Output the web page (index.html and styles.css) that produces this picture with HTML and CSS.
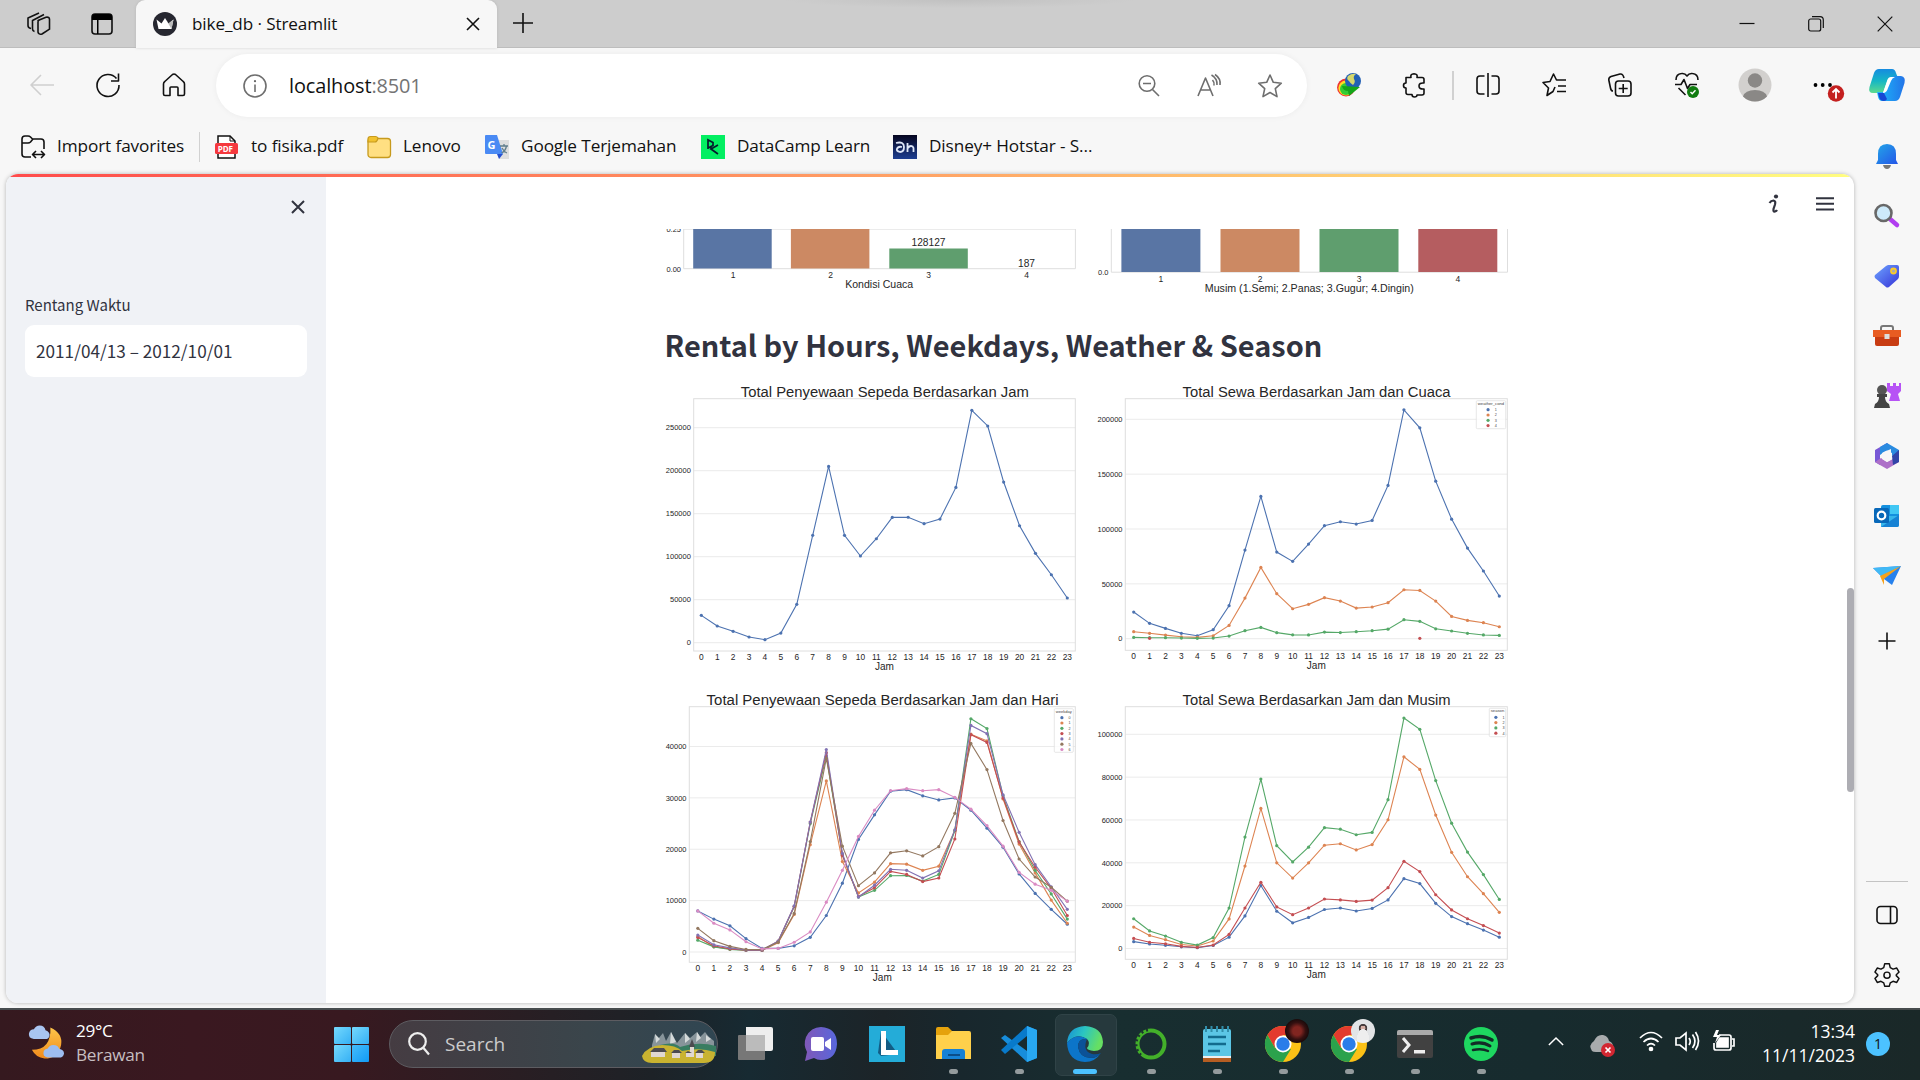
FILE: index.html
```html
<!DOCTYPE html>
<html lang="id">
<head>
<meta charset="utf-8">
<title>bike_db · Streamlit</title>
<link rel="stylesheet" href="styles.css">
</head>
<body>
<div class="browser">
  <header class="tabstrip">
    <div class="tab-tools">
      <svg class="i24" viewBox="0 0 24 24"><g class="ln"><path d="M11 8.500 19 5.200q3.500-.5 3.500 2v10l-7.500 4.800q-3.500.8-4-2V10q0-1.500 1-1.800z"/><path d="M7.500 19.500q-2-.5-2-2.500V8.500L17 2.500M4 16.500q-3-.5-3-3V6l11-5"/></g></svg>
      <svg class="i24" viewBox="0 0 24 24"><rect x="2" y="2" width="20" height="20" rx="3" class="ln"/><path d="M2 8V5q0-3 3-3h14q3 0 3 3v3zM7 8h1.500v14H7z"/></svg>
    </div>
    <div class="tab">
      <svg class="i24" viewBox="0 0 24 24"><circle cx="12" cy="12" r="12" fill="#262730"/><path d="m3.500 7.500 5 4L12 6l3.500 5.500 5-4L18.500 17h-13z" fill="#fff"/><path d="m12 6 3.500 5.500 5-4L18.500 17z" fill="#bbb"/></svg>
      <span class="tab-title">bike_db · Streamlit</span>
      <svg class="i14" viewBox="0 0 14 14"><path class="ln" d="m1 1 12 12M13 1 1 13"/></svg>
    </div>
    <svg class="new-tab" viewBox="0 0 22 22"><path class="ln" d="M11 1v20M1 11h20"/></svg>
    <div class="window-buttons">
      <svg viewBox="0 0 16 16"><path class="ln thin" d="M.5 7.500h15"/></svg>
      <svg viewBox="0 0 16 16"><g class="ln thin"><rect x=".7" y="3" width="12" height="12" rx="2"/><path d="M4 .7h8q3.300 0 3.300 3.300v8"/></g></svg>
      <svg viewBox="0 0 16 16"><path class="ln thin" d="m.7.7 14.600 14.600M15.300.7.7 15.300"/></svg>
    </div>
  </header>

  <nav class="toolbar">
    <div class="cell nav"><svg class="i24 off" viewBox="0 0 24 24"><path class="ln" d="M11 2 1 12l10 10M1 12h23"/></svg></div>
    <div class="cell nav"><svg class="i24" viewBox="0 0 24 24"><path class="ln" d="M20.500 5.500A11 11 0 1 0 23 12M22.500.5V8H15"/></svg></div>
    <div class="cell nav"><svg class="i24" viewBox="0 0 24 24"><path class="ln" d="M1.500 11q0-1.500 1.300-2.500l7.700-7q1.500-1 3 0l7.700 7q1.300 1 1.300 2.500v10q0 1.500-1.500 1.500h-5V15q0-1-1-1h-6q-1 0-1 1v7.500H3q-1.500 0-1.500-1.500z"/></svg></div>
    <div class="address">
      <svg class="i24 grey" viewBox="0 0 24 24"><circle cx="12" cy="12" r="11" class="ln"/><path class="ln" d="M12 10.500v7.500"/><circle cx="12" cy="7.200" r="1.100" fill="#666"/></svg>
      <span class="url">localhost<span class="port">:8501</span></span>
      <svg class="i22 grey" viewBox="0 0 22 22"><path class="ln" d="M5 8.500h8M14.500 14.500 21 21"/><circle class="ln" cx="9" cy="8.500" r="7.800"/></svg>
      <svg class="i24 grey" viewBox="0 0 24 24"><path class="ln" d="m1 22 7.500-18L16 22M4 16h9M14.500 1q6 3.500 5.500 10M15.500 6q2 2 1.500 5.500M18 .5q6 4 5 10.500"/></svg>
      <svg class="i24 grey" viewBox="0 0 24 24"><path class="ln" d="m12 1 3.300 7.300 8 .9-6 5.400 1.700 8L12 18.500l-7 4.100 1.700-8-6-5.400 8-.9z"/></svg>
    </div>
    <div class="cell idm"><svg class="i24" viewBox="0 0 24 24"><circle cx="9" cy="14.500" r="9" fill="#e33"/><circle cx="9" cy="15" r="7.600" fill="#fd2"/><circle cx="9" cy="16" r="6" fill="#3c3"/><circle cx="16" cy="8" r="8" fill="#2360b5"/><path d="M11 3q4-3 8-2-3 2-2 5 2 3-1 6-3-2-4-4-3-2-1-5z" fill="#d5d86d"/><path d="m5 13 18 1-11 9-1-5q-5 0-6-5z" fill="#15a519"/></svg></div>
    <div class="cell"><svg class="i24" viewBox="0 0 24 24"><path class="ln" d="M3 4.500h5Q7 1 11 .8q4 .2 3 3.700h5q2 0 2 2V10q-5-.5-5 3t5 3v4q0 2-2 2h-5q0 2-2.500 2T9 21.500H5q-2 0-2-2V15q-2.500 0-2.500-2.500T3 10z"/></svg></div>
    <span class="rule"></span>
    <div class="cell"><svg class="i24" viewBox="0 0 24 24"><path class="ln" d="M12 0v24M8.500 3H4Q1 3 1 6v12q0 3 3 3h4.500M15.500 3H20q3 0 3 3v12q0 3-3 3h-4.500"/></svg></div>
    <div class="cell"><svg class="i24" viewBox="0 0 24 24"><path class="ln" d="m13 14-2 4.500-6 4 1.500-7.500L1 9.500 8 8.500 11.500 1l3 6H24M16 13h8M15 18.500h9"/></svg></div>
    <div class="cell"><svg class="i24" viewBox="0 0 24 24"><g class="ln"><rect x="7.500" y="8" width="15.500" height="15" rx="3"/><path d="M15.200 11v9M10.700 15.500h9M5 18q-2 0-2.500-3L.8 7Q.5 4.500 3 3.500L12 1q3-.5 4 4"/></g></svg></div>
    <div class="cell"><svg class="i26" viewBox="0 0 26 26"><path class="ln" d="M2 8q0-6 5.500-6.500Q11 1 13 4q2-3 5.500-2.500Q24 2 24 8M1 12.500h6l3-5 3.500 9 2.500-4h7M4.500 16l7 7"/><circle cx="19" cy="20" r="6" fill="#107c10"/><path d="m16.500 20 1.700 1.800 3.300-3.600" fill="none" stroke="#fff" stroke-width="1.400"/></svg></div>
    <div class="cell avatar"><svg viewBox="0 0 34 34"><circle cx="17" cy="17" r="16.500" fill="#d2d0ce"/><circle cx="17" cy="12.500" r="7.200" fill="#8a8886"/><path d="M5 28.500Q7 22 17 22t12 6.500q-5 5-12 5t-12-5z" fill="#8a8886"/></svg></div>
    <div class="cell more"><svg viewBox="0 0 32 34"><circle cx="2.500" cy="17" r="1.900"/><circle cx="9.700" cy="17" r="1.900"/><circle cx="17" cy="17" r="1.900"/><circle cx="23" cy="25.500" r="8.200" fill="#c4201f"/><path d="M23 30.500v-9M19.500 24.500l3.500-3.500 3.500 3.500" fill="none" stroke="#fff" stroke-width="1.800"/></svg></div>
    <div class="cell copilot"><svg viewBox="0 0 36 32"><defs><linearGradient id="cpa" x1="0" y1="0" x2="0" y2="1"><stop offset="0" stop-color="#168be0"/><stop offset=".5" stop-color="#16b7c4"/><stop offset="1" stop-color="#5edb8c"/></linearGradient><linearGradient id="cpb"><stop offset="0" stop-color="#1cb9fb"/><stop offset="1" stop-color="#2374e8"/></linearGradient></defs><path d="M10 0h13q3 0 4 4l2 5h-7q-3 0-4 4l-3 8q-1 4-5 3H4q-5 0-3.500-6L5 4q1.500-4 5-4z" fill="url(#cpa)"/><path d="M26 32H13q-3 0-4-4l-1-5h6q3 0 4-4l3-8q1-4 5-4h6q5 1 3.500 7L31 28q-1.500 4-5 4z" fill="url(#cpb)"/><path d="M15 24q3-1 4-5l3-7q1-3 4-4h-4q-3 0-4 4l-4 12z" fill="#fff"/><path d="M9 24h6l3 6q-1 2-3 2-4 0-5-4z" fill="#1748d5"/></svg></div>
  </nav>

  <div class="favorites">
    <div class="fav f1"><svg class="i24" viewBox="0 0 24 24"><g class="ln"><path d="M10 22H4q-3 0-3-3V4q0-3 3-3h3q1.500 0 2.500 1l2 2H20q3 0 3 3v7M1 8h6q1.500 0 2.500-1l2.500-3M12 19.500h11M15 16l-3.500 3.500L15 23M20 16l3.500 3.500L20 23"/></g></svg><span>Import favorites</span></div>
    <span class="rule"></span>
    <div class="fav f2"><svg class="i24" viewBox="0 0 24 24"><path d="M3 1h12l5 5v17H3z" fill="#fff" stroke="#111" stroke-width="1.500"/><path d="M15 1v5h5" fill="none" stroke="#111"/><rect x="0" y="8" width="23" height="11" rx="1.500" fill="#f5393e"/><text x="2.800" y="16.500" class="pdf">PDF</text></svg><span>to fisika.pdf</span></div>
    <div class="fav f3"><svg class="i24" viewBox="0 0 24 24"><rect x="1" y="3.500" width="22.500" height="19" rx="3" fill="#ffdf82" stroke="#c79a1d" stroke-width="1.300"/><path d="M1 7V4q0-2.500 2.500-2.500h5Q10 1.500 11 3q-1 4-3 4z" fill="#f1c22e" stroke="#c79a1d" stroke-width="1.200"/></svg><span>Lenovo</span></div>
    <div class="fav f4"><svg class="i24" viewBox="0 0 24 24"><path d="M10 5h14v19H14z" fill="#dedede"/><path d="M0 1q0-1 1-1h11l6 19H1q-1 0-1-1z" fill="#4a8af4"/><path d="m12 19 6 0-4 5z" fill="#2550d0"/><text x="2.500" y="14" class="gt">G</text><path d="M15 11h8M19 9v2m2.500 0q-1 5-5 7M17 13q2 4 5 5" stroke="#607d8b" stroke-width="1.300" fill="none"/></svg><span>Google Terjemahan</span></div>
    <div class="fav f5"><svg class="i24" viewBox="0 0 24 24"><path fill="#03ef62" d="M0 0h24v24H0z"/><path d="M7 14V5l5 2.500v3L7 13M17 10l-7 4 7 5M10 14V11" fill="none" stroke="#05192d" stroke-width="1.700"/></svg><span>DataCamp Learn</span></div>
    <div class="fav f6"><svg class="i24" viewBox="0 0 24 24"><defs><linearGradient id="dh" x2="0" y2="1"><stop stop-color="#06061f"/><stop offset="1" stop-color="#1d3e91"/></linearGradient></defs><path fill="url(#dh)" d="M0 0h24v24H0z"/><path d="M3 8q8-2 8 4 0 5-4 5-4-1-3-3 1-3 5-2M14.500 8v9M15 13q1-2 3-2t2.500 2v4" fill="none" stroke="#dfe7f8" stroke-width="1.800"/></svg><span>Disney+ Hotstar - S...</span></div>
  </div>

  <div class="body">
    <div class="viewport">
      <div class="decoration"></div>
      <aside class="sidebar">
        <svg class="sidebar-close" viewBox="0 0 14 14"><path d="m1 1 12 12M13 1 1 13" stroke="#31333f" stroke-width="2"/></svg>
        <label class="label">Rentang Waktu</label>
        <div class="input">2011/04/13 – 2012/10/01</div>
      </aside>
      <main class="main">
        <div class="app-header">
          <svg class="running" viewBox="0 0 12 20"><circle cx="8" cy="2.500" r="2.100"/><path d="M1.500 9q1.500-2.500 4-2.500 2.500.5 1.500 4L5.500 15q-.5 3 1.500 2.500 1.500-.5 2-1.500" fill="none" stroke="#31333f" stroke-width="2.200"/></svg>
          <svg class="burger" viewBox="0 0 18 14"><path d="M0 1.200h18M0 6.800h18M0 12.400h18" stroke="#31333f" stroke-width="2"/></svg>
        </div>
        <div class="content">
          <div class="row" id="bars"></div>
          <h2>Rental by Hours, Weekdays, Weather &amp; Season</h2>
          <div class="row" id="top"></div>
          <div class="row" id="bottom"></div>
        </div>
        <div class="scrollbar"></div>
      </main>
    </div>
    <div class="rail">
      <svg viewBox="0 0 28 28"><defs><linearGradient id="bell" x2="1" y2="1"><stop stop-color="#23a7e8"/><stop offset="1" stop-color="#2455e8"/></linearGradient></defs><path d="M10 23h8q-1 4-4 4t-4-4z" fill="#777"/><path d="M5 18V12q0-10 9-10t9 10v6l2 4H3z" fill="url(#bell)"/></svg>
      <svg viewBox="0 0 28 28"><path d="m17 17 7 6" stroke="#b13df0" stroke-width="4.500" stroke-linecap="round"/><circle cx="10.500" cy="11" r="8" fill="#cdeafa" stroke="#686868" stroke-width="2.600"/></svg>
      <svg viewBox="0 0 28 28"><defs><linearGradient id="tag" x2="1" y2="1"><stop stop-color="#6ea5ff"/><stop offset="1" stop-color="#3532d8"/></linearGradient></defs><path d="M15 3h9q2 0 2 2v9q0 2-1 3l-9 8q-2 1-3 0L2 16q-1-2 0-3L13 4z" fill="url(#tag)"/><circle cx="20.500" cy="9" r="2.500" fill="#aaa" stroke="#fbca2a" stroke-width="1.800"/></svg>
      <svg viewBox="0 0 28 28"><path d="M8 9V6q0-2 2-2h8q2 0 2 2v3" fill="none" stroke="#777" stroke-width="2"/><path d="M2 10h24v12q0 2-2 2H4q-2 0-2-2z" fill="#c83c12"/><path d="M0 8h28v7H0z" fill="#e85c22"/><rect x="11.500" y="12" width="5" height="5" fill="#ddd"/></svg>
      <svg viewBox="0 0 28 28"><path d="M14 1h3v3h3V1h3v3h3V1h2v8l-3 3 2 7H16l2-7-4-3z" fill="#b753f5"/><circle cx="9" cy="8" r="5" fill="#555"/><path d="M4 12h10v3h-2q0 5 4 7l1 4H1l1-4q4-2 4-7H4z" fill="#444"/></svg>
      <svg viewBox="0 0 28 28"><path d="M14 1 2 8v12l5 3V11l11-6z" fill="#7858d6"/><path d="m14 1 12 7v9l-8-4V7l-7 3-4 3V5z" fill="#2a8be0"/><path d="M2 20l5 3 7 4 12-7v-6l-12 6-6-4z" fill="#ad70c8"/><path d="m26 8v12l-6 3-1-9z" fill="#3145a8"/><path d="M14 8.500 19 11v6l-5 3-5-3v-6z" fill="#f7f7f7"/></svg>
      <svg viewBox="0 0 28 28"><rect x="8" y="3" width="18" height="15" rx="2" fill="#1490df"/><path d="M17 3h9v9h-9z" fill="#41c7f4"/><path d="M8 14l18 0v9q0 2-2 2H8z" fill="#35b5eb"/><path d="m8 25 18-12v10q0 2-2 2z" fill="#1682d4"/><rect x="1" y="6" width="15" height="15" rx="1.500" fill="#0868b9"/><circle cx="8.500" cy="13.500" r="3.800" fill="none" stroke="#fff" stroke-width="2.200"/></svg>
      <svg viewBox="0 0 28 28"><path d="M0 6 28 4 19 23 11 17z" fill="#2681ed"/><path d="M0 6 28 4 8 14z" fill="#41b9f5"/><path d="M28 4 11 17v6l-4-9z" fill="#f6a21b"/></svg>
      <svg class="add" viewBox="0 0 28 28"><path class="ln" d="M14 5.500v17M5.500 14h17"/></svg>
      <span class="rail-gap"></span>
      <svg viewBox="0 0 28 28"><g class="ln"><rect x="4" y="5.500" width="20" height="17" rx="3.500"/><path d="M17.500 5.500v17"/></g></svg>
      <svg viewBox="0 0 28 28"><g class="ln"><path d="M11.500 2h5l1 4 3 1.700 4-1.200 2.500 4.300-3 2.900v1l3 3-2.500 4.300-4-1.200-3 1.700-1 3.500h-5l-1-3.500-3-1.700-4 1.200L1 17.700l3-3v-1l-3-2.900 2.500-4.300 4 1.200 3-1.700z"/><circle cx="14" cy="14.200" r="3.300"/></g></svg>
    </div>
  </div>
</div>

<footer class="taskbar">
  <div class="weather">
    <svg viewBox="0 0 38 36"><defs><linearGradient id="moon" x2="0" y2="1"><stop stop-color="#ffc64a"/><stop offset="1" stop-color="#f08a1c"/></linearGradient></defs><path d="M23 2Q36 8 34 20 31 34 17 34 8 33 4 25q20 0 19-23z" fill="url(#moon)"/><path d="M6 14q-6-1-5-6 1-4 5-4 2-4 6-4 5 0 6 5 5 2 4 6-1 3-4 3z" fill="#a9c5f1"/><path d="M20 33q-5-1-4-6 1-3 4-3 2-4 6-4 5 0 6 4 5 1 5 5-1 4-5 4z" fill="#9dbdf0"/></svg>
    <div><b>29°C</b><span>Berawan</span></div>
  </div>
  <div class="start"><i></i><i></i><i></i><i></i></div>
  <div class="search">
    <svg class="i24" viewBox="0 0 24 24"><g fill="none" stroke="#eee" stroke-width="2.200"><circle cx="10.500" cy="9.500" r="8.300"/><path d="m16.500 16 5.500 6.500"/></g></svg>
    <span>Search</span>
    <svg class="scene" viewBox="0 0 74 32"><path d="M10 14 13 3l3 5 5-6 3 8 5-9 6 11 8-10 5 5 7-6 3 5 5-5 4 5 5 4v12H10z" fill="#87949a"/><path d="m13 3 1 9 4-4zM29 1l-1 12 6-2zM43 2l0 10 5-4zM55 1l-1 10 5-4zM64 4l0 7 5-3z" fill="#d5dada"/><path d="M18 14q14-4 20 2 18-6 36-1v10H20z" fill="#387d61"/><path d="M0 25q5-10 20-11 14 0 20 6 18-4 33 1 0 11-11 11H10Q1 32 0 25z" fill="#c9b330"/><path d="M9 20h14v6H9zM30 22h8v5h-8zM48 15h4v11h-8v-5h4zM54 21h7v6h-7z" fill="#e0d8d2"/><path d="m8 21 4-4h10l3 4zM29 22l3-3h5l3 3zM47 16l3-8 3 8zM43 22l3-2 4 2zM53 22l3-3h4l3 3z" fill="#4c4b50"/></svg>
  </div>
  <div class="apps">
    <div class="app"><svg viewBox="0 0 36 36"><path d="M9 1h25q2 0 2 2v20q0 2-2 2H9z" fill="#eee"/><path d="M1 10q0-1 1-1h25q1 0 1 1v23q0 1-1 1H2q-1 0-1-1z" fill="#777"/><path d="M9 9h19v16H9z" fill="#bbb"/></svg></div>
    <div class="app"><svg viewBox="0 0 36 36"><defs><linearGradient id="chat"><stop stop-color="#8058b8"/><stop offset="1" stop-color="#5867dc"/></linearGradient></defs><path d="M18 1q16 1 16 17-1 16-16 16-4 0-7-2l-9 3 2-9Q0 19 3 11 8 1 18 1z" fill="url(#chat)"/><rect x="8" y="11" width="13" height="14" rx="2" fill="#fff"/><path d="m22 16 6-4v12l-6-4z" fill="#fff"/></svg></div>
    <div class="app"><svg viewBox="0 0 36 36"><path d="M0 0h36v36H0z" fill="#24acd8"/><path d="m12 5-3 22 3 3 17-2z" fill="#135c84"/><path d="M12 5h5v19h12v5H12z" fill="#fff"/></svg></div>
    <div class="app on"><svg viewBox="0 0 36 36"><path d="M1 3q0-2 2-2h10l4 4v9H1z" fill="#e5a20c"/><path d="M1 9h12l4-4h17q2 0 2 2v26H1z" fill="#ffd04b"/><path d="M7 33V26q0-3 3-3h17q3 0 3 3v7z" fill="#1681d5"/><path d="M13 28h12v2H13z" fill="#0b4d89"/></svg></div>
    <div class="app on"><svg viewBox="0 0 36 36"><path d="m26 0 10 4v28l-10 4L0 12l4-3 22 16z" fill="#178ddb"/><path d="m26 0 10 4v28l-10 4z" fill="#28a8f2"/><path d="M26 10 4 28l-4-4L26 0z" fill="#087acb"/></svg></div>
    <div class="app active"><svg viewBox="0 0 36 36"><defs><linearGradient id="edg" x2="1" y2=".3"><stop stop-color="#168dd7"/><stop offset=".5" stop-color="#2bc5c1"/><stop offset="1" stop-color="#66df63"/></linearGradient></defs><path d="M18 0q17 1 18 16 0 9-9 9-7-1-7-3 4-5 0-9Q9 6 0 17 1 1 18 0z" fill="url(#edg)"/><path d="M0 17q9-11 20-4-9-1-9 8 2 11 13 11 6 0 10-5-6 9-16 9Q1 35 0 17z" fill="#0c75c9"/><path d="M20 13q-9-1-9 8 2 11 13 11 6 0 10-5-4 2-9 1-10-3-5-15z" fill="#0b5298"/></svg></div>
    <div class="app on"><svg viewBox="0 0 36 36"><circle cx="18" cy="18" r="13.500" fill="none" stroke="#43b02a" stroke-width="4"/><path d="M15 4A14.500 14.500 0 0 0 8 29" fill="none" stroke="#1c3330" stroke-width="2.500" stroke-dasharray="2 3"/></svg></div>
    <div class="app on"><svg viewBox="0 0 36 36"><rect x="4" y="3" width="28" height="31" rx="2" fill="#5bc6e5"/><path d="M4 30h28v2H4z" fill="#eee"/><path d="M4 32h28v4H4z" fill="#b55d22"/><path d="M9 11h18M9 18h18M9 25h12" stroke="#126b8d" stroke-width="2.400"/><path d="M7 0v6M12.500 0v6M18 0v6M23.500 0v6M29 0v6" stroke="#318eaa" stroke-width="2"/></svg></div>
    <div class="app on"><svg class="chrome" viewBox="0 0 36 36"><use href="#chrome"/></svg><span class="badge dark"></span></div>
    <div class="app on"><svg class="chrome" viewBox="0 0 36 36"><g id="chrome"><circle cx="18" cy="18" r="18" fill="#fbc116"/><path d="M2.400 9A18 18 0 0 1 33.600 9H18L10 22z" fill="#e33b2e"/><path d="M2.400 9A18 18 0 0 0 18 36l8-13-16-1z" fill="#2ba24c"/><circle cx="18" cy="18" r="8.500" fill="#fff"/><circle cx="18" cy="18" r="6.700" fill="#2a7de9"/></g></svg><span class="badge light"></span></div>
    <div class="app on"><svg viewBox="0 0 36 36"><rect y="4" width="36" height="28" rx="2" fill="#414141"/><path d="M0 9V6q0-2 2-2h32q2 0 2 2v3z" fill="#aaa"/><path d="m6 12 6 7-6 7" fill="none" stroke="#eee" stroke-width="3"/><path d="M17 24h11v3.500H17z" fill="#eee"/></svg></div>
    <div class="app on"><svg viewBox="0 0 36 36"><circle cx="18" cy="18" r="17" fill="#1ed760"/><g fill="none" stroke="#132b27" stroke-linecap="round"><path d="M8 12q11-4 21 2" stroke-width="3.500"/><path d="M9 18q10-3 18 2" stroke-width="3"/><path d="M10 24q9-2 15 1" stroke-width="2.500"/></g></svg></div>
  </div>
  <div class="tray">
    <svg class="chev" viewBox="0 0 18 10"><path d="m1 9 8-8 8 8"/></svg>
    <svg class="cloud" viewBox="0 0 26 24"><path d="M2 18q-4-6 2-10 3-7 9-6 5 1 6 6 5 2 4 8-2 3-7 3H6q-3 0-4-1z" fill="#a8abad" stroke="none"/><circle cx="18" cy="17" r="7" fill="#d22732" stroke="none"/><path d="m15.500 14.500 5 5m0-5-5 5"/></svg>
    <svg viewBox="0 0 24 24"><path d="M1 9Q12-2 23 9M4.500 13q7.500-7 15 0M8 16.500q4-4 8 0"/><circle cx="12" cy="20" r="1.500" fill="#fff"/></svg>
    <svg viewBox="0 0 24 24"><path d="M1 9h4l6-5v17l-6-5H1zM14 9q2.500 3.500 0 7M17.500 5.500q5 7 0 13.500M20.500 3q6 9 0 18"/></svg>
    <svg viewBox="0 0 24 24"><path d="M8 6h10q2 0 2 2v11q0 2-2 2H5q-2 0-2-2v-5M21 10h2v7h-2" /><path d="M9 9h8v9H6v-4z" fill="#fff"/><path d="M5 1 2 8h4l-2 6 6-8H6l2-5z" fill="#fff" stroke="none"/></svg>
  </div>
  <div class="clock"><span>13:34</span><span>11/11/2023</span></div>
  <div class="notif">1</div>
</footer>
<script src="charts.js"></script>
</body>
</html>
```
FILE: styles.css
```css
* { box-sizing: border-box; }
body { margin: 0; width: 1920px; height: 1080px; overflow: hidden; font-family: "Open Sans", "Noto Sans", sans-serif; color: #111; background: #f7f7f7; }
svg { display: block; flex: none; overflow: visible; }
.ln { fill: none; stroke: #111; stroke-width: 1.6; stroke-linejoin: round; }
.thin { stroke-width: 1.2; }
.grey .ln { stroke: #6e6e6e; }
.off .ln { stroke: #cfcfcf; }
.i24 { width: 24px; height: 24px; }
.i26 { width: 26px; height: 26px; }
.i22 { width: 22px; height: 22px; }
.i14 { width: 14px; height: 14px; }

.browser { height: 1008px; display: flex; flex-direction: column; }
.tabstrip { height: 48px; display: flex; background: radial-gradient(ellipse 175px 8px at 960px 0, #c1c1c1, #cdcdcd); border-bottom: 1px solid #bdbdbd; }
.tab-tools { width: 136px; display: flex; gap: 39px; padding: 12px 0 0 27px; }
.tab { width: 361px; height: 48px; background: #f7f7f7; border-radius: 9px 9px 0 0; display: flex; align-items: center; padding: 0 17px; box-shadow: 0 0 3px #9996; }
.tab-title { flex: 1; margin: -2px 0 0 15px; font-size: 17.1px; letter-spacing: -.1px; }
.new-tab { width: 22px; height: 22px; margin: 12px 0 0 15px; }
.window-buttons { margin: 16px 27px 0 auto; display: flex; gap: 53px; }
.window-buttons svg { width: 16px; height: 16px; }

.toolbar { height: 74px; display: flex; align-items: center; padding-left: 9px; }
.cell { flex: none; width: 66.3px; display: flex; justify-content: center; }
.nav { width: 66px; }
.address { flex: none; width: 1091px; height: 63px; margin: 1px 0 0 9px; border-radius: 32px; background: #fff; box-shadow: 0 0 6px #0000000d; display: flex; align-items: center; gap: 37px; padding: 0 25px 0 27px; }
.url { flex: 1; margin: -1px 0 0 -15px; font-size: 19.9px; color: #111; letter-spacing: -.1px; }
.port { color: #747474; }
.idm { margin-left: 9px; }
.rule { flex: none; width: 2px; height: 29px; background: #d1d1d1; margin: 0 1px 0 3px; }
.avatar { width: 71px; }
.avatar svg { width: 34px; height: 34px; }
.more { width: 68px; padding-left: 8px; }
.more svg { width: 32px; height: 34px; }
.copilot { width: 56px; }
.copilot svg { width: 36px; height: 32px; }

.favorites { height: 52px; display: flex; align-items: center; padding: 0 0 3px 21px; font-size: 17.2px; letter-spacing: -.1px; white-space: nowrap; }
.fav { flex: none; display: flex; align-items: center; gap: 12px; }
.fav span { margin-top: -2px; }
.f1 { width: 176px; }
.f2 { width: 152px; }
.f3 { width: 118px; }
.f4 { width: 216px; }
.f5 { width: 192px; }
.favorites .rule { width: 1px; height: 30px; margin: 0 15px 0 2px; }
.pdf { font: bold 8px "Open Sans", sans-serif; fill: #fff; }
.gt { font: bold 11px "Open Sans", sans-serif; fill: #fff; }

.body { flex: 1; display: flex; padding-left: 6px; }
.viewport { width: 1848px; height: 829px; border-radius: 12px; overflow: hidden; background: #fff; box-shadow: 0 0 4px #0004; display: grid; grid-template: 3px 1fr / 320px 1fr; font-family: "Noto Sans CJK SC", "Noto Sans", sans-serif; color: #31333f; }
.decoration { grid-column: 1 / 3; background: linear-gradient(90deg, #ff4b4b, #fffd80); }
.sidebar { background: #f0f2f6; padding: 23px 19px; }
.sidebar-close { width: 14px; height: 14px; margin: 0 2px 0 auto; }
.label { display: block; font-size: 15px; line-height: 24px; margin: 79px 0 8px; }
.input { height: 52px; line-height: 51px; border-radius: 9px; background: #fff; padding-left: 11px; font-size: 17.2px; white-space: nowrap; }
.main { position: relative; overflow: hidden; }
.app-header { height: 52px; display: flex; align-items: center; justify-content: flex-end; gap: 36px; padding: 2px 20px 0 0; fill: #31333f; }
.running { width: 12px; height: 20px; }
.burger { width: 18px; height: 14px; }
.content { height: 774px; padding-left: 334px; overflow: hidden; }
.row { display: flex; }
h2 { height: 75px; margin: 0; padding-left: 4.500px; font-size: 28.950px; line-height: 78px; font-weight: 700; white-space: nowrap; }
.scrollbar { position: absolute; right: 0; top: 411px; width: 7px; height: 204px; border-radius: 4px; background: #adadb3; }
.row text { font-family: "Liberation Sans", Arial, sans-serif; fill: #262626; }
.row .lt { fill: #444; }
.row .clip { overflow: hidden; }
.frame { fill: none; stroke: #dedede; stroke-width: 1; }
.grid { stroke: #ebebeb; stroke-width: 1; }

.rail { width: 66px; height: 834px; display: flex; flex-direction: column; align-items: center; gap: 32px; margin-top: -32px; }
.rail svg { width: 28px; height: 28px; }
.rail .add { margin-top: 5px; }
.rail-gap { flex: none; width: 42px; height: 1px; background: #c4c4c4; margin: 194px 0 -13px; }
.rail svg:last-child { width: 26px; height: 26px; margin-top: 1px; }

.taskbar { height: 72px; border-top: 2px solid #474c4e; background: linear-gradient(90deg, #35191f, #3a1820 10%, #381920 18%, #291e23 27%, #1d2227 34%, #172a32 39%, #1c2428 46%, #18272d 50%, #182e30 58%, #172b2e 80%, #1a2828); display: flex; color: #fff; }
.taskbar > * { flex: none; }
.weather { width: 334px; display: flex; gap: 11px; padding: 13px 0 0 28px; }
.weather svg { width: 37px; height: 36px; margin-top: 2px; }
.weather div { display: flex; flex-direction: column; font-size: 17.2px; line-height: 24px; margin-top: -4px; letter-spacing: -.3px; }
.weather b { font-weight: 400; }
.weather span { color: #c6bec0; }
.start { width: 35px; height: 35px; margin-top: 17px; display: grid; grid-template-columns: 1fr 1fr; gap: 1.5px; }
.start i { background: linear-gradient(135deg, #75d9fd, #35b0f5); border-radius: 1px; }
.start i:last-child { background: linear-gradient(135deg, #45bdfb, #119af5); }
.search { width: 329px; height: 48px; margin: 10px 0 0 20px; border-radius: 24px; border: 1px solid #5d5c61; background: linear-gradient(90deg, #453c42, #3a454b 60%, #304652); display: flex; align-items: center; padding: 0 1px 0 17px; }
.search span { flex: 1; margin-left: 14px; font-size: 19px; color: #ccc; }
.scene { width: 74px; height: 32px; margin-top: 5px; }
.apps { display: flex; margin-left: 4px; }
.app { width: 66px; height: 70px; display: flex; justify-content: center; padding-top: 16px; position: relative; }
.app svg { width: 36px; height: 36px; z-index: 1; }
.app.on::after, .app.active::after { content: ""; position: absolute; left: 29px; bottom: 6px; width: 9px; height: 5px; border-radius: 3px; background: #949b9d; }
.app.active::after { left: 21px; width: 24px; background: #4cc2ff; }
.app.active::before { content: ""; position: absolute; left: 3px; top: 4px; width: 60px; height: 60px; border-radius: 7px; background: #26393d; border: 1px solid #304347; }
.badge { position: absolute; left: 35px; top: 9px; width: 24px; height: 24px; border-radius: 50%; z-index: 2; }
.badge.dark { background: radial-gradient(ellipse at 50% 50%, #812520 0 25%, #351010 50%, #130909 75%); }
.badge.light { background: radial-gradient(ellipse at 50% 85%, #eee 0 35%, transparent 36%), radial-gradient(circle at 50% 38%, #d6afa5 0 12%, #463d3e 14% 20%, #e2e4e6 24%); }
.tray { display: flex; align-items: center; margin: -4px 0 0 34px; height: 70px; fill: none; stroke: #fff; stroke-width: 1.7; }
.tray svg { width: 24px; height: 24px; margin-right: 12px; }
.tray .chev { width: 16px; height: 9px; margin-right: 26px; }
.tray .cloud { width: 26px; height: 24px; margin: 7px 23px 0 0; }
.clock { width: 105px; display: flex; flex-direction: column; align-items: flex-end; font-size: 17.5px; line-height: 24px; padding-top: 9px; margin-left: auto; white-space: nowrap; }
.notif { width: 24px; height: 24px; border-radius: 50%; background: #4cc2ff; color: #111; text-align: center; font-size: 14px; line-height: 24px; margin: 22px 30px 0 11px; }
```
FILE: charts.js
```js
const C = ["#4c72b0", "#dd8452", "#55a868", "#c44e52", "#8172b3", "#937860", "#da8bc3"];

const text = (x, y, s, size, anchor = "middle", width = 0, cls = "") =>
  `<text class="${cls}" x="${x}" y="${y}" font-size="${size}" text-anchor="${anchor}"${width ? ` textLength="${width}" lengthAdjust="spacingAndGlyphs"` : ""}>${s}</text>`;

const svg = (x, y, w, h, inner, cls = "") =>
  `<svg class="${cls}" width="${w}" height="${h}" viewBox="${x} ${y} ${w} ${h}">${inner}</svg>`;

// Line plot: box = [left, top, right, bottom], y values in thousands.
function linePlot(o) {
  const [l, t, r, b] = o.box;
  const X = h => o.x0 + (o.x23 - o.x0) * h / 23;
  const Y = v => o.y0 - (o.y0 - o.yTop) * v / o.top;
  let s = "";
  for (let v = 0; v <= o.top; v += o.step) {
    s += `<path class="grid" d="M${l} ${Y(v)}H${r}"/>` + text(l - 2.8, Y(v) + 2.7, v * 1000, 7.5, "end");
  }
  s += `<rect class="frame" x="${l}" y="${t}" width="${r - l}" height="${b - t}"/>`;
  for (let h = 0; h < 24; h++) s += text(X(h), o.tickY, h, 8.4);
  s += text((l + r) / 2, o.tickY + 10, "Jam", 10, "middle", 19);
  s += text((l + r) / 2 + .3, t - 1.5, o.title, 15.3, "middle", o.titleW);
  o.series.forEach((d, i) => {
    const pts = d.map((v, h) => v === null ? null : [X(h), Y(v)]).filter(Boolean);
    if (pts.length > 2) s += `<polyline fill="none" stroke="${C[i]}" stroke-width="1.1" points="${pts.join(" ")}"/>`;
    s += pts.map(p => `<circle cx="${p[0]}" cy="${p[1]}" r="1.6" fill="${C[i]}"/>`).join("");
  });
  if (o.legend) {
    const [x, y, w, h, name, first] = o.legend;
    s += `<rect x="${x}" y="${y}" width="${w}" height="${h}" rx="1" fill="#fffc" stroke="#ddd" stroke-width=".7"/>`;
    s += text(x + w / 2, y + 4, name, 4, "middle", w - 3, "lt");
    o.series.forEach((_, i) => {
      const cy = y + 9 + i * 5.3, cx = x + w * .4;
      s += `<circle cx="${cx}" cy="${cy}" r="1.6" fill="${C[i]}"/>` + text(cx + 7.7, cy + 1.3, first + i, 3.7, "middle", 0, "lt");
    });
  }
  return svg(o.view[0], o.view[1], 430, o.view[2], s);
}

const BAR = ["#5975a4", "#cc8963", "#5f9e6e", "#b55d60"];
const bar = (x, y, w, bottom, i) => `<rect x="${x}" y="${y}" width="${w}" height="${bottom - y}" fill="${BAR[i]}"/>`;

const weather = `<path class="grid" d="M683.7 229.5H1075.4"/><path class="frame" d="M683.7 229V268.7H1075.4V229"/>`
  + bar(693.2, 229, 78.5, 268.5, 0) + bar(790.9, 229, 78.5, 268.5, 1) + bar(889.3, 248.5, 78.5, 268.5, 2)
  + text(928.5, 246, 128127, 10.2, "middle", 34) + text(1026.5, 267, 187, 10.2)
  + text(681, 232, "0.25", 7.5, "end") + text(681, 271.5, "0.00", 7.5, "end")
  + [733, 830.5, 928.5, 1026.5].map((x, i) => text(x, 278, i + 1, 8.5)).join("")
  + text(879.2, 288, "Kondisi Cuaca", 10, "middle", 68);

const season = `<path class="frame" d="M1111.3 229V272.2H1507.5V229"/>`
  + [1121.4, 1220.5, 1319.5, 1418.3].map((x, i) => bar(x, 229, 79, 272, i) + text(x + 39.5, 281.5, i + 1, 8.5)).join("")
  + text(1108.5, 275, "0.0", 7.5, "end")
  + text(1309.3, 292, "Musim (1.Semi; 2.Panas; 3.Gugur; 4.Dingin)", 10, "middle", 209);

document.getElementById("bars").innerHTML =
  svg(660, 229, 430, 76, weather, "clip") + svg(1090, 229, 430, 76, season, "clip");

const red = Array(24).fill(null);
red[1] = .3; red[18] = .3;

document.getElementById("top").innerHTML = linePlot({
  view: [660, 380, 305], box: [693.7, 398.7, 1075.3, 651], x0: 701.3, x23: 1067.3, y0: 642.7, yTop: 427.7, top: 250, step: 50, tickY: 660,
  title: "Total Penyewaan Sepeda Berdasarkan Jam", titleW: 288,
  series: [[31.8,19.4,13.2,6.6,3.5,11.2,44.6,124.8,205,124.8,100.8,120.9,145.7,145.9,138.4,143.8,180.6,270.2,252,186.8,136,103.9,79,52]]
}) + linePlot({
  view: [1090, 380, 305], box: [1125.3, 398.7, 1507.3, 650.3], x0: 1133.7, x23: 1499.3, y0: 638.7, yTop: 419.3, top: 200, step: 50, tickY: 659.3,
  title: "Total Sewa Berdasarkan Jam dan Cuaca", titleW: 268, legend: [1476.3, 400.7, 29.4, 28, "weather_cond", 1],
  series: [
    [24.3,14,9.4,4.9,2.7,8.2,30.1,80.8,129.7,79,70.5,86.3,103,106.6,104.5,107.8,139.7,208.6,192.2,143.6,109,82.6,61.7,38.9],
    [6.4,4.9,3.3,1.8,1.2,2.7,12.1,37,65,41,27.3,31.3,37.4,34.3,27.9,28.9,32.8,44.6,44,34.3,20.3,16.7,14.6,10.9],
    [1.2,.9,.9,.6,.3,.6,2.4,7.3,10.3,5.5,3.5,3.4,6,5.6,6.4,7.3,8.7,17.3,15.8,9,7,4.9,3.4,3],
    red
  ]
});

document.getElementById("bottom").innerHTML = linePlot({
  view: [660, 685, 318], box: [689.3, 706.7, 1075.3, 962.3], x0: 697.8, x23: 1067.3, y0: 952, yTop: 746.5, top: 40, step: 10, tickY: 971,
  title: "Total Penyewaan Sepeda Berdasarkan Jam dan Hari", titleW: 352, legend: [1054.3, 708.7, 19, 43.6, "weekday", 0],
  series: [
    [8,6.4,5.1,2.6,.7,.7,1.2,2.85,7.1,13.4,21.9,26.7,31.3,31.6,30.4,29.6,30,27.6,24.1,20.4,15.2,11.4,8.3,5.4],
    [3,1,.65,.4,.3,1.8,7.3,20.9,33.3,17.6,11.5,13.6,17.2,17.1,15.9,16.7,23.7,42.4,41.1,29.8,21,15.4,10.1,5.6],
    [2.3,1,.5,.3,.3,2,8.8,25,38.1,18.9,10.7,12,14.85,14.9,13.8,15.1,23.6,45.4,43.5,30.4,21.5,15.9,11.3,6.4],
    [2.8,1.2,.6,.35,.35,2.1,8.9,25.3,38.8,18.8,10.8,12.5,15.7,15.1,13.7,14.4,22,42.3,40.8,30,21.4,16.5,12.4,7.1],
    [3.3,1.4,.8,.4,.4,2.1,9,25.3,39.4,19.2,10.7,13,16.1,15.9,14.4,15.8,23.8,44.1,42.5,30.6,23.3,17,12.7,8.3],
    [4.6,2.2,1.1,.5,.5,1.9,7.5,21.5,37.7,20.6,12.9,15.4,19.3,19.7,18.7,20.5,27,40.6,35.5,25.6,18.1,14.6,12.6,9.9],
    [8,5.6,4.3,2,.6,.7,1.9,3.9,9.7,15.9,22.5,27.6,31.4,31.8,31.4,31.6,30.1,27.8,24.6,20.6,15.5,13.2,12,9.9]
  ]
}) + linePlot({
  view: [1090, 685, 318], box: [1125.3, 706.7, 1507.3, 959.3], x0: 1133.7, x23: 1499.3, y0: 948.5, yTop: 734.3, top: 100, step: 20, tickY: 968,
  title: "Total Sewa Berdasarkan Jam dan Musim", titleW: 268, legend: [1489.3, 708.3, 16.4, 28.4, "season", 1],
  series: [
    [3.2,2.1,1.5,.8,.4,1.4,5.3,15.2,29.4,17.4,12,14.5,18.2,18.9,17.5,18.7,22.7,32.6,30.3,21.1,14.9,11.6,8.6,5.3],
    [10,6.1,4.1,1.9,1.2,3.5,13.8,38.5,65.4,40,32.9,40,48.2,48.9,46,48.5,60.1,89.5,83.6,62.3,44.9,33.5,25.6,16.9],
    [13.9,8.2,5.8,2.9,1.6,5.1,18.9,52,79.1,48,40.4,47.3,56.4,55.7,53.1,54.2,69.5,107.6,102.3,78.4,58.5,45,34.5,22.9],
    [4.7,2.9,2.2,1,.5,1.6,6.6,18.9,30.9,19.4,15.8,18.9,23.1,22.7,22,22.6,28.4,40.7,35.9,25.1,18,13.9,10.7,7.2]
  ]
});
```
